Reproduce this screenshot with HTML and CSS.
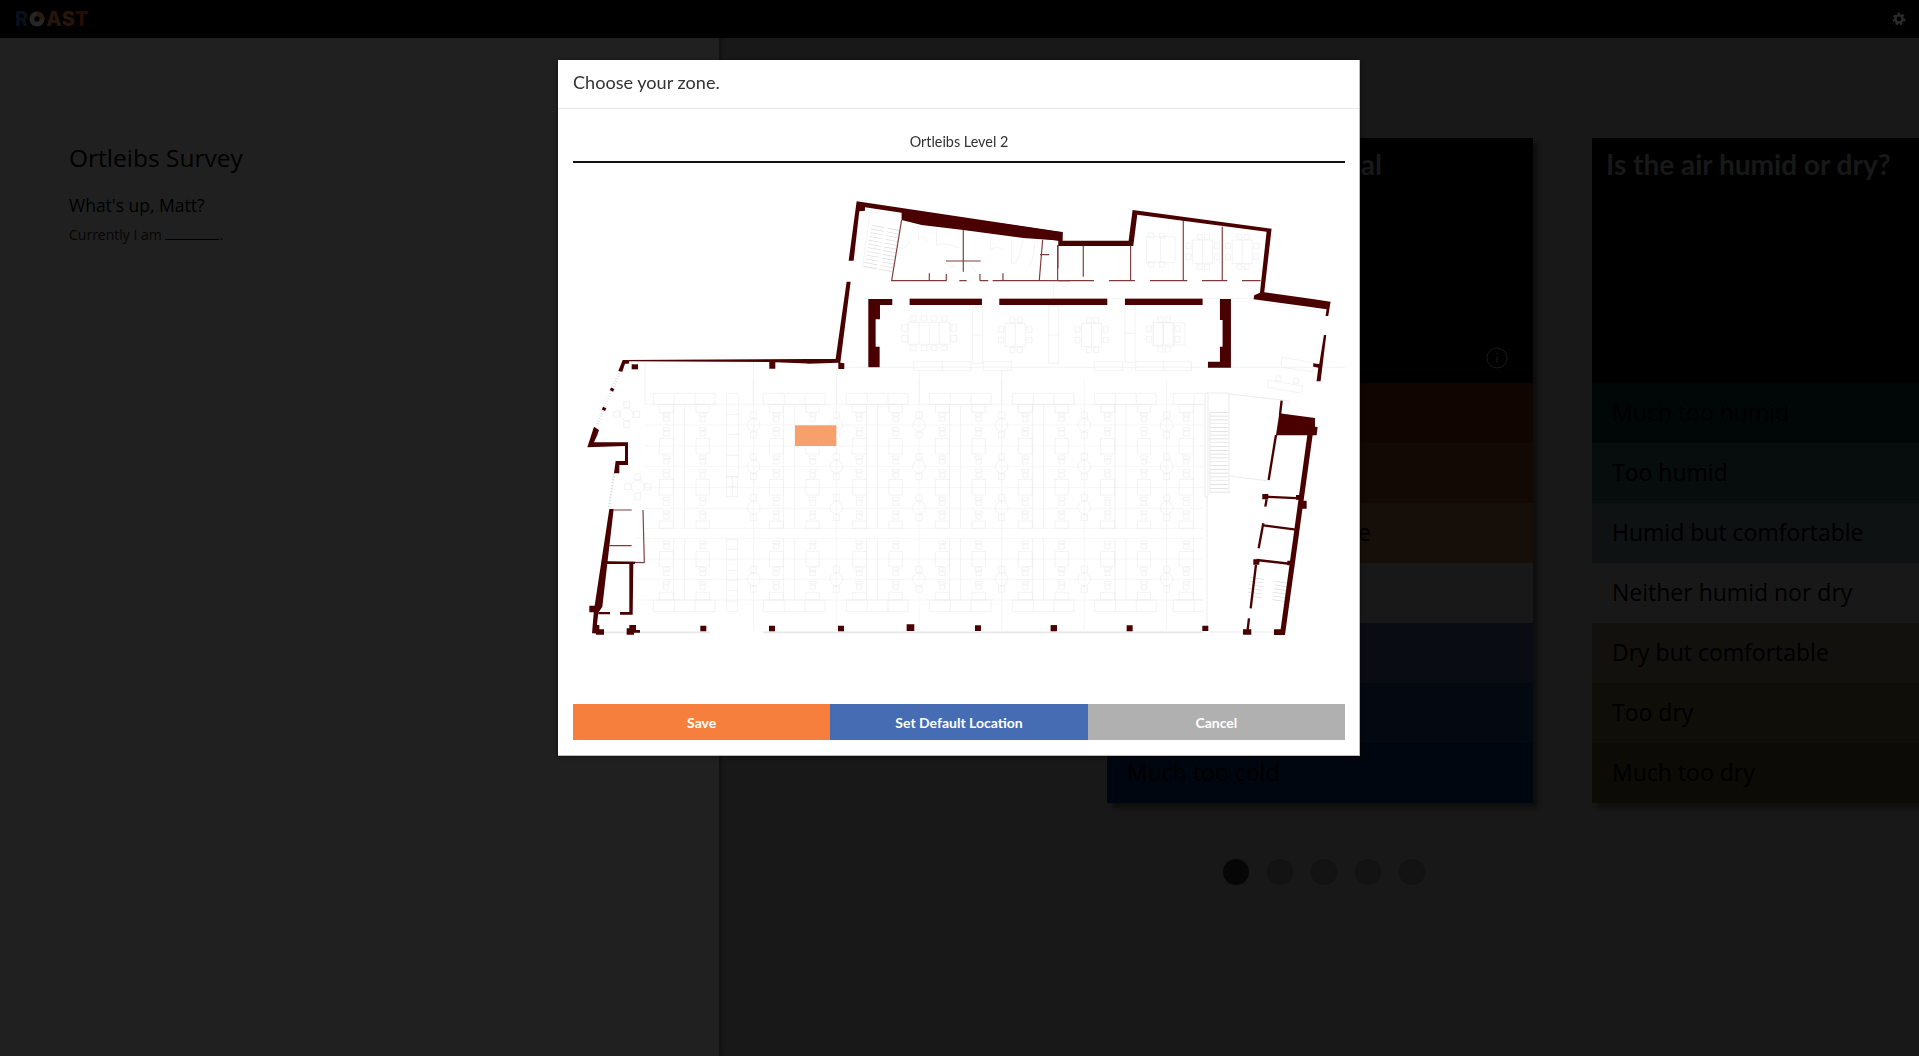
FILE: index.html
```html
<!DOCTYPE html>
<html lang="en">
<head>
    <meta charset="UTF-8">
    <title>Ortleibs Survey</title>
    <link rel="stylesheet" href="styles.css">
</head>
<body>
    <header class="topbar">
        <div class="logo">
            <span class="logo-r">R</span>
            <svg class="logo-o" viewBox="0 0 18 18">
                <circle cx="9" cy="9" r="8.5" fill="#262626"/>
                <path d="M9 9V.5A8.5 8.5 0 0 1 17.5 9z" fill="#2e1808"/>
                <circle cx="9" cy="9" r="3" fill="#030303"/>
            </svg>
            <span class="logo-a">A</span><span class="logo-s">S</span><span class="logo-t">T</span>
        </div>
        <svg class="gear" viewBox="0 0 14 14">
            <circle cx="7" cy="7" r="3.6" fill="none" stroke="#2b2b2b" stroke-width="2.4"/>
            <circle cx="7" cy="7" r="5.4" fill="none" stroke="#2b2b2b" stroke-width="2" stroke-dasharray="2.4 2.25"/>
        </svg>
    </header>

    <main class="layout">
        <aside class="intro">
            <h1>Ortleibs Survey</h1>
            <h2>What's up, Matt?</h2>
            <p>Currently I am <span class="blank"></span>.</p>
        </aside>

        <section class="survey">
            <div class="cards">
                <div class="card">
                    <div class="card-head">
                        <h3>What is your thermal</h3>
                        <svg class="info" viewBox="0 0 22 22">
                            <circle cx="11" cy="11" r="10" fill="none" stroke="#191919"/>
                            <path d="M11 9.5V16M11 6v1.4" stroke="#191919" fill="none"/>
                        </svg>
                    </div>
                    <div class="row hot1">Much too hot</div>
                    <div class="row hot2">Too hot</div>
                    <div class="row hot3">Warm but comfortable</div>
                    <div class="row neutral">Neither hot nor cold</div>
                    <div class="row cold3">Cool but comfortable</div>
                    <div class="row cold2">Too cold</div>
                    <div class="row cold1">Much too cold</div>
                </div>
                <div class="card">
                    <div class="card-head">
                        <h3>Is the air humid or dry?</h3>
                    </div>
                    <div class="row wet1">Much too humid</div>
                    <div class="row wet2">Too humid</div>
                    <div class="row wet3">Humid but comfortable</div>
                    <div class="row neutral">Neither humid nor dry</div>
                    <div class="row dry3">Dry but comfortable</div>
                    <div class="row dry2">Too dry</div>
                    <div class="row dry1">Much too dry</div>
                </div>
            </div>
            <div class="dots">
                <span class="dot active"></span>
                <span class="dot"></span>
                <span class="dot"></span>
                <span class="dot"></span>
                <span class="dot"></span>
            </div>
        </section>
    </main>

    <div class="modal">
        <div class="modal-title">Choose your zone.</div>
        <div class="modal-body">
            <div class="floor-name">Ortleibs Level 2</div>
            <svg class="plan" viewBox="573 163 772 541">
                <defs>
                    <path id="chair" d="M0 0h20v8H0zM2 11h16v13H2z"/>
                    <g id="desks">
                        <path d="M43 73V445M76 73V445M43 475V660M76 475V660"/>
                        <path d="M-18 40H167V73H-18zM45 40V73M107 40V73M-18 660H167V695H-18zM45 660V695M107 660V695"/>
                        <path d="M0 73H42V97H0zM0 175H42V222H0zM0 298H42V345H0zM0 423H42V445H0zM0 515H42V560H0zM0 637H42V660H0z"/>
                        <path d="M110 73H150V97H110zM110 175H150V222H110zM110 298H150V345H110zM110 423H150V445H110zM110 515H150V560H110zM110 637H150V660H110z"/>
                        <use href="#chair" x="11" y="100"/><use href="#chair" x="11" y="143"/>
                        <use href="#chair" x="11" y="228"/><use href="#chair" x="11" y="268"/>
                        <use href="#chair" x="11" y="352"/><use href="#chair" x="11" y="393"/>
                        <use href="#chair" x="11" y="483"/><use href="#chair" x="11" y="563"/><use href="#chair" x="11" y="604"/>
                        <use href="#chair" x="120" y="100"/><use href="#chair" x="120" y="143"/>
                        <use href="#chair" x="120" y="228"/><use href="#chair" x="120" y="268"/>
                        <use href="#chair" x="120" y="352"/><use href="#chair" x="120" y="393"/>
                        <use href="#chair" x="120" y="483"/><use href="#chair" x="120" y="563"/><use href="#chair" x="120" y="604"/>
                    </g>
                    <g id="round">
                        <circle cx="0" cy="0" r="19"/>
                        <path d="M-9 -39H9V-21H-9zM-9 21H9V39H-9z"/>
                    </g>
                    <g id="table4">
                        <circle cx="0" cy="0" r="19"/>
                        <path d="M-9 -39H9V-21H-9zM-9 21H9V39H-9zM-39 -9H-21V9H-39zM21 -9H39V9H21z"/>
                    </g>
                    <g id="meet">
                        <path d="M0 0H60V70H0zM30 0V70"/>
                        <path d="M14 -17h15v15H14zM36 -17h15v15H36zM14 73h15v15H14zM36 73h15v15H36zM-20 10h15v17H-20zM-20 42h15v17H-20zM65 10h15v17H65zM65 42h15v17H65z"/>
                    </g>
                    <clipPath id="floorclip"><rect x="0" y="0" width="1902" height="800"/></clipPath>
                </defs>

                <!-- furniture, coordinates are 3x from x570 y380 -->
                <g class="faint" transform="translate(570 380) scale(.3333)" clip-path="url(#floorclip)">
                    <path class="grid" d="M225 73H1900M225 135H1900M225 198H1900M225 260H1900M225 322H1900M225 385H1900M225 445H1900M200 475H1900M200 537H1900M200 598H1900M200 660H1900"/>
                    <path class="grid" d="M551 -60V750M799 -60V750M1047 -60V750M1295 -60V750M1543 -60V750M1790 -60V750"/>
                    <use href="#desks" x="268"/>
                    <use href="#desks" x="598"/>
                    <use href="#desks" x="847"/>
                    <use href="#desks" x="1096"/>
                    <use href="#desks" x="1345"/>
                    <use href="#desks" x="1592"/>
                    <use href="#desks" x="1828"/>
                    <use href="#round" x="551" y="135"/><use href="#round" x="551" y="260"/><use href="#round" x="551" y="383"/><use href="#round" x="551" y="598"/>
                    <use href="#round" x="799" y="135"/><use href="#round" x="799" y="260"/><use href="#round" x="799" y="383"/><use href="#round" x="799" y="598"/>
                    <use href="#round" x="1047" y="135"/><use href="#round" x="1047" y="260"/><use href="#round" x="1047" y="383"/><use href="#round" x="1047" y="598"/>
                    <use href="#round" x="1295" y="135"/><use href="#round" x="1295" y="260"/><use href="#round" x="1295" y="383"/><use href="#round" x="1295" y="598"/>
                    <use href="#round" x="1543" y="135"/><use href="#round" x="1543" y="260"/><use href="#round" x="1543" y="383"/><use href="#round" x="1543" y="598"/>
                    <use href="#round" x="1790" y="135"/><use href="#round" x="1790" y="260"/><use href="#round" x="1790" y="383"/><use href="#round" x="1790" y="598"/>
                    <use href="#table4" x="170" y="103"/>
                    <use href="#table4" x="203" y="320"/>
                    <path d="M470 40H505V290H470zM470 103H505M470 163H505M470 226H505M470 290H503V350H470zM487 290V350M470 320H503"/>
                    <path d="M470 478H503V695H470zM470 508H503M470 540H503M470 571H503M470 602H503M470 632H503M470 664H503"/>
                    <path d="M100 757H420M580 757H1900" class="glass"/>
                </g>

                <!-- top rooms -->
                <g class="faint" transform="translate(570 170) scale(.3333)">
                    <path d="M225 575V703M550 575V703M800 592V703M1048 600V703M1295 600V703M823 592H895M930 592H2360"/>
                    <path d="M1015 457H1140V523H1015zM1047 457V523M1078 457V523M1108 457V523"/>
                    <path d="M1022 438h17v15h-17zM1054 438h17v15h-17zM1084 438h17v15h-17zM1115 438h17v15h-17zM1022 527h17v15h-17zM1054 527h17v15h-17zM1084 527h17v15h-17zM1115 527h17v15h-17zM996 464h17v20h-17zM996 496h17v20h-17zM1143 464h17v20h-17zM1143 496h17v20h-17z"/>
                    <use href="#meet" x="1306" y="460"/>
                    <use href="#meet" x="1535" y="460"/>
                    <use href="#meet" x="1750" y="458"/>
                    <path d="M1750 458H1845V525H1750zM1780 458V525M1812 458V525"/>
                    <path d="M1208 412H1238V580H1208zM1208 495H1238M1436 410H1466V580H1436zM1436 495H1466M1665 405H1695V577H1665zM1665 490H1695"/>
                    <path d="M1030 575H1203V602H1030zM1117 575V602M1240 575H1325V602H1240zM1573 575H1658V602H1573zM1697 575H1865V602H1697zM1781 575V602"/>
                    <path d="M900 128L995 130L965 305L878 290z"/>
                    <path d="M988 235Q1010 240 1020 210M1045 165V210Q1060 190 1075 215M1100 175V225Q1130 215 1170 235M1125 280Q1150 300 1160 280M1200 280Q1210 305 1228 310M1262 195V240Q1280 225 1300 240M1325 205V280Q1345 290 1360 205M1395 215Q1390 280 1375 290"/>
                    <path d="M1730 200H1815V278H1730zM1772 200V278M1735 189h16v16h-16zM1768 189h16v16h-16zM1735 275h16v16h-16zM1768 275h16v16h-16z"/>
                    <use href="#meet" x="1868" y="210"/>
                    <use href="#meet" x="1987" y="210"/>
                    <path d="M1450 332V390M1450 385H2050M2360 593H2560M2360 593L2355 670L2810 700M2060 395L2265 425"/>
                    <path d="M2135 562L2230 578L2228 605L2135 592zM2093 630L2198 648L2195 670L2094 652zM2118 618h16v15h-16zM2170 625h16v15h-16z"/>
                </g>

                <!-- stairs and glass -->
                <g class="stairs">
                    <line x1="878" y1="226" x2="870" y2="268" stroke-width="13" stroke-dasharray=".7 3.1"/>
                    <line x1="894" y1="229" x2="886" y2="272" stroke-width="13" stroke-dasharray=".7 3.1"/>
                    <line x1="1219" y1="412" x2="1219" y2="494" stroke-width="18" stroke-dasharray=".7 3.1"/>
                    <line x1="1257" y1="578" x2="1254" y2="600" stroke-width="14" stroke-dasharray=".7 3"/>
                    <line x1="1282" y1="582" x2="1279" y2="602" stroke-width="14" stroke-dasharray=".7 3"/>
                    <line x1="620" y1="371" x2="597" y2="425" stroke-width="3" stroke-dasharray=".7 2"/>
                    <line x1="614" y1="473" x2="609" y2="508" stroke-width="2" stroke-dasharray="1.5 1.5"/>
                </g>
                <path class="stair-wall" d="M1205 393V497H1208V393H1205M1207 497V632M1207 393H1229V494M1210 412V494M1229 394L1290 401M1229 476L1269 481M1210 632H1244M1253 632H1275"/>

                <!-- selected zone -->
                <rect class="zone" x="795" y="425.3" width="41.3" height="20.7"/>

                <!-- thin partitions -->
                <g class="thin" transform="translate(570 170) scale(.3333)">
                    <path d="M995 150L965 332H1130M1168 332H1190M1230 332H1255M1268 332H1500M1180 180V305M1128 273H1232M1078 310V332M1129 312V332M1230 312V332M1299 310V332M1418 210L1408 332M1410 254H1438M1464 225V295"/>
                    <path d="M1463 225V332M1465 332H1572M1540 225V320M1617 332H1695M1682 225V332M1740 332H1852M1840 150V332M1896 332H1972M1957 170V332M2016 332H2072"/>
                </g>
                <g class="thin" transform="translate(570 380) scale(.3333)">
                    <path d="M131 390H185M219 390L223 548M118 497H185M105 545L223 548"/>
                </g>

                <!-- walls -->
                <g class="wall" transform="translate(570 170) scale(.3333)">
                    <polygon points="860,94 1478,186 1476,212 1360,204 1180,180 1055,165 995,150 995,128 885,112 885,122 868,124 851,272 836,272"/>
                    <polygon points="830,335 842,335 811,578 823,580 823,597 805,597 805,578 716,581 616,577 616,596 598,596 598,576 178,574 176,581 165,581 157,605 145,603 158,570 797,567"/>
                    <rect x="185" y="583" width="19" height="15"/>
                    <rect x="121" y="654" width="11" height="9" transform="rotate(25 126 658)"/>
                    <rect x="97" y="712" width="11" height="9" transform="rotate(25 102 716)"/>
                    <polygon points="895,387 967,387 967,405 930,405 930,448 917,448 917,530 929,530 929,592 895,592"/>
                    <rect x="1019" y="386" width="217" height="19"/>
                    <rect x="1288" y="386" width="324" height="19"/>
                    <rect x="1665" y="386" width="233" height="19"/>
                    <polygon points="1950,387 1983,387 1983,593 1914,593 1914,575 1950,575 1950,530 1958,530 1958,450 1950,450"/>
                    <polygon points="1290,160 1478,187 1478,212 1676,212 1688,120 2105,176 2083,367 2282,395 2275,438 2267,438 2270,418 2051,388 2053,376 2070,368 2090,185 1702,134 1690,228 1465,228 1465,212 1290,185"/>
                    <polygon points="2262,495 2269,495 2252,634 2240,634 2245,593 2230,590 2230,580 2248,582"/>
                </g>
                <g class="wall" transform="translate(570 380) scale(.3333)">
                    <polygon points="72,140 87,150 82,165 72,187 174,187 174,255 148,255 148,280 132,280 137,243 165,243 165,198 52,202"/>
                    <polygon points="118,387 131,387 97,680 85,698 78,760 66,760 72,690"/>
                    <polygon points="93,545 195,545 195,552 190,552 188,704 150,704 150,696 178,696 178,552 100,552"/>
                    <path d="M85 696H120V703H85zM58 677H80V697H58zM72 735H88V760H72zM78 748H102V764H78zM178 735H198V750H178zM170 745H192V764H170zM190 750H210V758H190z"/>
                    <path d="M391 737h18v17h-18zM597 737h18v17h-18zM804 737h18v17h-18zM1010 733h23v20h-23zM1215 736h18v17h-18zM1443 736h18v17h-18z"/>
                </g>
                <g class="wall" transform="translate(1000 380) scale(.3333)">
                    <polygon points="838,100 945,114 945,140 953,141 950,166 938,166 855,765 822,765 822,748 842,748 922,166 828,166"/>
                    <path d="M845 62L840 105M828 165L806 300M800 358L796 380M790 430L776 505M768 555L752 685M747 715L743 750" class="wall-line"/>
                    <path d="M790 350L905 355M790 436L888 449M770 540L875 552" class="wall-line"/>
                    <path d="M787 342h18v16h-18zM888 345h18v14h-18zM900 362h20v24h-20zM760 538h18v16h-18zM862 542h18v14h-18zM729 748h25v16h-25zM152 736h18v18h-18zM380 736h18v18h-18zM607 737h18v16h-18z"/>
                </g>
            </svg>
            <div class="actions">
                <button class="btn save">Save</button>
                <button class="btn default">Set Default Location</button>
                <button class="btn cancel">Cancel</button>
            </div>
        </div>
    </div>
</body>
</html>
```

FILE: styles.css
```css
* {
    box-sizing: border-box;
}

html, body {
    height: 100%;
}

body {
    margin: 0;
    display: flex;
    flex-direction: column;
    overflow: hidden;
    background-color: #181818;
    color: #000;
    font-family: "Open Sans", sans-serif;
}

.topbar {
    flex: 0 0 38px;
    display: flex;
    justify-content: space-between;
    align-items: center;
    padding: 0 13px 0 15px;
    background-color: #000;
}

.logo {
    display: flex;
    align-items: center;
    gap: 0;
    font-family: Inter, sans-serif;
    font-size: 20px;
    font-weight: 800;
    line-height: 1;
}

.logo-r { color: #0a0f1c; }
.logo-o { width: 16px; height: 16px; margin: 0 1px; }
.logo-a { color: #261608; }
.logo-s { color: #28160b; }
.logo-t { color: #240d05; }

.gear {
    width: 14px;
    height: 14px;
}

.layout {
    flex: 1;
    display: flex;
    min-height: 0;
}

.intro {
    flex: 0 0 719px;
    padding: 103px 0 0 69px;
    background-color: #202020;
    box-shadow: 2px 0 3px rgba(0, 0, 0, 0.35);
    position: relative;
}

.intro h1 {
    margin: 0 0 18px;
    font-size: 24.5px;
    font-weight: 400;
    line-height: 34px;
}

.intro h2 {
    margin: 0 0 7px;
    font-size: 17.5px;
    font-weight: 400;
    line-height: 25px;
}

.intro p {
    margin: 0;
    font-size: 14px;
    line-height: 20px;
    color: #060606;
}

.blank {
    display: inline-block;
    width: 54px;
    border-bottom: 1px solid #000;
}

.survey {
    flex: 1;
    min-width: 0;
    padding-top: 100px;
    overflow: hidden;
}

.cards {
    display: flex;
    gap: 59px;
    padding-left: 388px;
    padding-bottom: 8px;
}

.card {
    flex: 0 0 426px;
    box-shadow: 5px 5px 4px rgba(0, 0, 0, 0.4);
}

.card-head {
    height: 245px;
    display: flex;
    flex-direction: column;
    justify-content: space-between;
    padding: 9px 14px 14px;
    background-color: #000;
}

.card-head h3 {
    margin: 0;
    font-family: Lato, sans-serif;
    font-size: 28px;
    font-weight: 700;
    line-height: 34px;
    color: #181818;
}

.info {
    width: 22px;
    height: 22px;
    align-self: flex-end;
    margin-right: 11px;
}

.row {
    height: 60px;
    padding-left: 20px;
    font-size: 23px;
    line-height: 58px;
}

.hot1 { background-color: #110501; }
.hot2 { background-color: #130904; }
.hot3 { background-color: #160e09; }
.neutral { background-color: #181818; }
.cold3 { background-color: #0a0c13; }
.cold2 { background-color: #040810; }
.cold1 { background-color: #00060f; }
.wet1 { background-color: #010706; }
.wet2 { background-color: #070c0c; }
.wet3 { background-color: #0e1213; }
.dry3 { background-color: #12110d; }
.dry2 { background-color: #0f0e09; }
.dry1 { background-color: #0c0b06; }

.dots {
    display: flex;
    justify-content: center;
    gap: 18px;
    margin-top: 48px;
    padding-left: 10px;
}

.dot {
    width: 26px;
    height: 26px;
    border-radius: 50%;
    background-color: #131313;
}

.dot.active {
    background-color: #060606;
}

/* zone picker */
.modal {
    position: fixed;
    top: 60px;
    left: 558px;
    width: 802px;
    height: 696px;
    display: flex;
    flex-direction: column;
    background-color: #fff;
    border-right: 1px solid #bbb;
    border-bottom: 1px solid #bbb;
    box-shadow: 0 1px 4px rgba(0, 0, 0, 0.5);
    font-family: Lato, sans-serif;
}

.modal-title {
    flex: 0 0 49px;
    padding: 0 15px;
    border-bottom: 1px solid #e8e8e8;
    font-size: 18.1px;
    line-height: 44px;
    color: #333;
}

.modal-body {
    flex: 1;
    display: flex;
    flex-direction: column;
    padding: 0 14px 0 15px;
}

.floor-name {
    flex: 0 0 54px;
    padding-top: 23px;
    border-bottom: 2px solid #111;
    text-align: center;
    font-size: 14.4px;
    line-height: 20px;
    color: #333;
}

.plan {
    width: 772px;
    height: 541px;
    display: block;
}

.faint, .faint use {
    fill: none;
    stroke: #ebebeb;
    stroke-width: 1.8;
}

.grid {
    stroke: #f4f4f4;
    stroke-width: 2.5;
}

.glass {
    stroke: #e6e6e6;
    stroke-width: 5;
}

.stairs line {
    stroke: #dcdcdc;
}

.stair-wall {
    fill: none;
    stroke: #e2e2e2;
    stroke-width: 0.7;
}

.zone {
    fill: #f7985f;
    opacity: 0.92;
}

.thin {
    fill: none;
    stroke: #7f3c3c;
    stroke-width: 3.5;
}

.wall {
    fill: #4a0000;
}

.wall-line {
    fill: none;
    stroke: #4a0000;
    stroke-width: 7;
}

.actions {
    display: flex;
}

.btn {
    flex: 1;
    height: 36px;
    border: 0;
    padding: 0;
    font-family: Lato, sans-serif;
    font-size: 14px;
    font-weight: 700;
    color: #fff;
}

.save { background-color: #f67f3e; }
.default { background-color: #466cb3; }
.cancel { background-color: #b0b0b0; }
```
